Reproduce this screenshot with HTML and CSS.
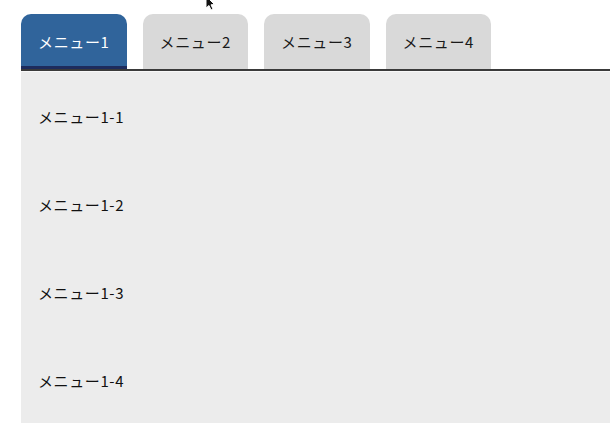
FILE: index.html
```html
<!DOCTYPE html>
<html lang="ja">
<head>
<meta charset="utf-8">
<link rel="stylesheet" href="styles.css">
</head>
<body>
<div class="page">
  <ul class="tabs">
    <li class="tab active">メニュー1</li>
    <li class="tab">メニュー2</li>
    <li class="tab">メニュー3</li>
    <li class="tab">メニュー4</li>
  </ul>
  <div class="rule"></div>
  <ul class="panel">
    <li class="item">メニュー1-1</li>
    <li class="item">メニュー1-2</li>
    <li class="item">メニュー1-3</li>
    <li class="item">メニュー1-4</li>
  </ul>
</div>
<svg class="cursor" width="12" height="12" viewBox="0 0 12 12">
  <path d="M2 -4 L2 8 L5 5.5 L7 10 L9 9 L7 4.8 L10.5 4.5 Z" fill="#111" stroke="#fff" stroke-width="1"/>
</svg>
</body>
</html>
```

FILE: styles.css
```css
html, body {
  margin: 0;
  padding: 0;
  background: #ffffff;
}
body {
  font-family: "Noto Sans CJK JP", "Noto Sans", sans-serif;
  font-size: 15px;
  letter-spacing: 0.6px;
  color: #111;
  position: relative;
  width: 610px;
  height: 448px;
  overflow: hidden;
}
.page {
  padding: 14px 0 0 21px;
}
.tabs {
  list-style: none;
  margin: 0;
  padding: 0;
  display: flex;
  gap: 16px;
}
.tab {
  box-sizing: border-box;
  width: 105.5px;
  height: 55px;
  background: #d9d9d9;
  border-radius: 10px 10px 0 0;
  display: flex;
  align-items: center;
  justify-content: center;
  color: #1a1a1a;
}
.tab.active {
  background: #30649b;
  color: #ffffff;
  border-bottom: 3px solid #1d2b5c;
  padding-top: 3px;
}
.rule {
  height: 2px;
  background: #3a3a3a;
  border-bottom: 1px solid #f8f8f8;
}
.panel {
  list-style: none;
  margin: 0;
  padding: 0;
  background: #ececec;
  height: 351px;
}
.item {
  box-sizing: border-box;
  height: 88px;
  padding-left: 17px;
  display: flex;
  align-items: center;
  padding-top: 0;
}
.cursor {
  position: absolute;
  left: 204px;
  top: 0;
}
```
